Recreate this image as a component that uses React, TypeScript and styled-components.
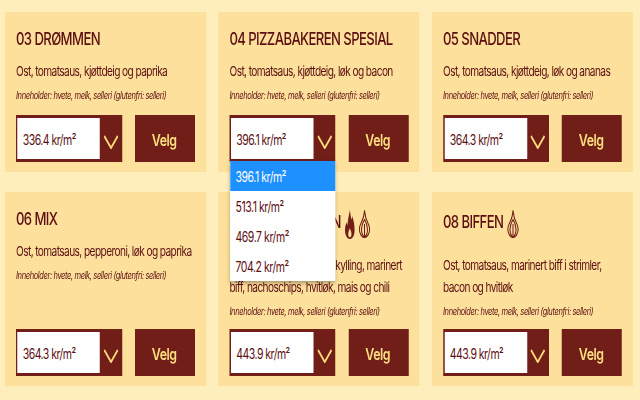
import React from "react";
import styled, { createGlobalStyle } from "styled-components";

const GlobalStyle = createGlobalStyle`
  html, body {
    margin: 0;
    padding: 0;
    background: #fdeebb;
    overflow: hidden;
  }
  * {
    box-sizing: border-box;
  }
`;

// the whole shot is squeezed sideways, so the page is laid out wide and scaled down
const Page = styled.div`
  width: 853.33px;
  height: 400px;
  padding: 12px 0 0 6.67px;
  transform: scaleX(0.75);
  transform-origin: 0 0;
  display: grid;
  grid-template-columns: repeat(3, 268px);
  grid-template-rows: 160px 194px;
  column-gap: 16.67px;
  row-gap: 20px;
  color: #5c0f12;
  font-family: Inter, "Liberation Sans", sans-serif;
`;

const Card = styled.div`
  background: #fde09b;
  padding: 0 14.67px 10px;
  display: flex;
  flex-direction: column;
`;

const Title = styled.div<{ $tall?: boolean }>`
  flex-shrink: 0;
  font-size: 17.500px;
  font-weight: 500;
  letter-spacing: -0.8px;
  height: 27px;
  margin-top: ${(p) => (p.$tall ? "16px" : "13px")};
  margin-bottom: ${(p) => (p.$tall ? "12px" : "1px")};
  display: flex;
  align-items: center;
  white-space: nowrap;
  gap: 5px;
`;

const Description = styled.div`
  flex-shrink: 0;
  margin-top: 7px;
  font-size: 13.500px;
  letter-spacing: -0.78px;
  line-height: 22px;
`;

const Allergens = styled.div`
  flex-shrink: 0;
  margin-top: 6px;
  font-size: 10px;
  font-style: italic;
  letter-spacing: -0.5px;
  line-height: 14px;
  white-space: nowrap;
`;

const Footer = styled.div`
  margin-top: auto;
  display: flex;
  justify-content: space-between;
`;

const SelectWrap = styled.div`
  position: relative;
  width: 141.33px;
  height: 47px;
`;

const SelectBox = styled.div`
  width: 100%;
  height: 100%;
  display: flex;
  background: #701e17;
  padding: 3px 0 3px 2px;
`;

const SelectValue = styled.div`
  width: 110px;
  background: #fff;
  display: flex;
  align-items: center;
  padding-left: 7px;
  padding-top: 2px;
  font-size: 14px;
  letter-spacing: -0.7px;
  white-space: nowrap;
`;

const SelectArrow = styled.div`
  flex: 1;
  display: flex;
  align-items: center;
  justify-content: center;
  padding-top: 6px;
`;

const Options = styled.div`
  position: absolute;
  top: 46px;
  left: 1px;
  width: 140px;
  background: #fff;
  box-shadow: 0 2px 5px rgba(0, 0, 0, 0.35);
  z-index: 2;
`;

const Option = styled.div<{ $active?: boolean }>`
  height: 30px;
  padding-left: 7px;
  display: flex;
  align-items: center;
  font-size: 14px;
  letter-spacing: -0.6px;
  background: ${(p) => (p.$active ? "#1e90ff" : "#fff")};
  color: ${(p) => (p.$active ? "#fff" : "#5c0f12")};
`;

const ChooseButton = styled.button`
  width: 80px;
  height: 47px;
  border: none;
  background: #701e17;
  color: #fddf7f;
  font-family: inherit;
  font-size: 16.500px;
  font-weight: 600;
  letter-spacing: -0.6px;
  padding: 3px 2px 0 0;
`;

const IconSlot = styled.span`
  display: inline-flex;
  margin-top: 2px;
  margin-bottom: -4px;
`;

const Chevron = () => (
  <svg width="20" height="14" viewBox="0 0 20 14">
    <polyline points="1,1 10,13 19,1" fill="none" stroke="#fdd97a" strokeWidth="2.200" />
  </svg>
);

const Garlic = () => (
  <IconSlot>
    <svg width="16" height="29" viewBox="0 0 14 27" preserveAspectRatio="none" fill="none" stroke="#701e17" strokeWidth="1.2">
      <path d="M7 1c-.6 3-.8 5-2 7.500C3.500 11.500 1 14 1 18c0 4 3 7.500 6 7.500s6-3.500 6-7.500c0-4-2.500-6.500-4-9.500C8 6.500 8 3.500 7 1z" />
      <path d="M7 9c-2.500 3-3.500 6-3.500 9s1.500 6 3.500 7.500c2-1.500 3.500-4.500 3.500-7.500S9.500 12 7 9z" />
      <path d="M7 13v12" />
    </svg>
  </IconSlot>
);

const Fire = () => (
  <IconSlot>
    <svg width="13" height="29" viewBox="0 0 12 24" preserveAspectRatio="none" fill="#701e17">
      <path d="M6 0c1 4 1 6 2 8 .5-1 .8-2 .8-3 2 4 3.200 8 3.200 11.500 0 4-2.500 7.500-6 7.500s-6-3.500-6-7.500c0-2.500 1-4.500 2-6.500 0 1 .3 2 1 2.500C3.500 8 5 4 6 0z" />
      <path d="M6 15c-1 2-2 3-2 5 0 1.500.9 2.500 2 2.500s2-1 2-2.500c0-2-1-3-2-5z" fill="#fde09b" />
    </svg>
  </IconSlot>
);

const Price = ({ value }: { value: string }) => <span>{value} kr/m²</span>;

type Pizza = {
  name: string;
  text: React.ReactNode;
  price: string;
  icons?: React.ReactNode;
  options?: string[];
};

const pizzas: Pizza[] = [
  { name: "03 DRØMMEN", text: "Ost, tomatsaus, kjøttdeig og paprika", price: "336.4" },
  {
    name: "04 PIZZABAKEREN SPESIAL",
    text: "Ost, tomatsaus, kjøttdeig, løk og bacon",
    price: "396.1",
    options: ["396.1", "513.1", "469.7", "704.2"],
  },
  { name: "05 SNADDER", text: "Ost, tomatsaus, kjøttdeig, løk og ananas", price: "364.3" },
  { name: "06 MIX", text: "Ost, tomatsaus, pepperoni, løk og paprika", price: "364.3" },
  {
    name: "07 KYLLINGBIFFEN",
    text: "Ost, tomatsaus, marinert kylling, marinert biff, nachoschips, hvitløk, mais og chili",
    price: "443.9",
    icons: (
      <>
        <Fire />
        <Garlic />
      </>
    ),
  },
  {
    name: "08 BIFFEN",
    text: "Ost, tomatsaus, marinert biff i strimler, bacon og hvitløk",
    price: "443.9",
    icons: <Garlic />,
  },
];

export default function App() {
  return (
    <>
      <GlobalStyle />
      <Page>
        {pizzas.map((pizza) => (
          <Card key={pizza.name}>
            <Title $tall={!!pizza.icons}>
              {pizza.name}
              {pizza.icons}
            </Title>
            <Description>{pizza.text}</Description>
            <Allergens>Inneholder: hvete, melk, selleri (glutenfri: selleri)</Allergens>
            <Footer>
              <SelectWrap>
                <SelectBox>
                  <SelectValue>
                    <Price value={pizza.price} />
                  </SelectValue>
                  <SelectArrow>
                    <Chevron />
                  </SelectArrow>
                </SelectBox>
                {pizza.options && (
                  <Options>
                    {pizza.options.map((o, i) => (
                      <Option key={o} $active={i === 0}>
                        <Price value={o} />
                      </Option>
                    ))}
                  </Options>
                )}
              </SelectWrap>
              <ChooseButton>Velg</ChooseButton>
            </Footer>
          </Card>
        ))}
      </Page>
    </>
  );
}
